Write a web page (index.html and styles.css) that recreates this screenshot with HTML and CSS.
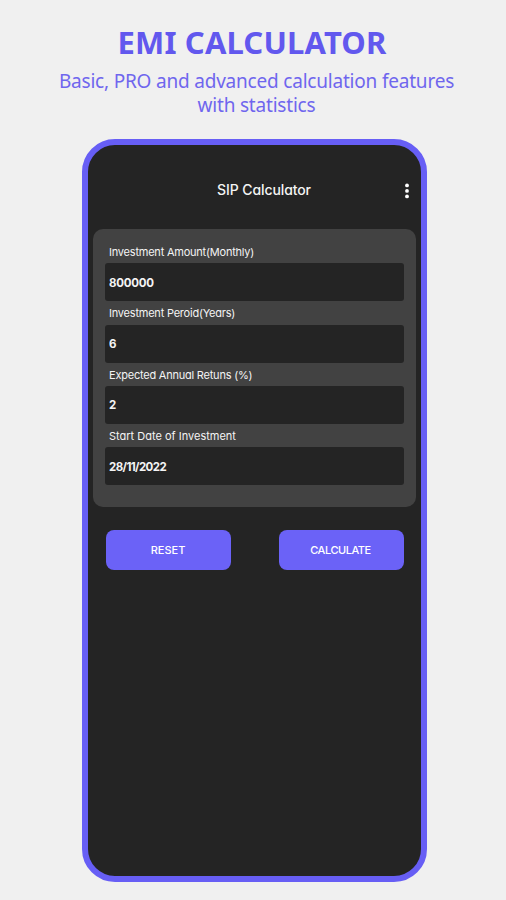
FILE: index.html
```html
<!DOCTYPE html>
<html lang="en">
<head>
    <meta charset="UTF-8">
    <meta name="viewport" content="width=device-width, initial-scale=1.0">
    <title>EMI Calculator</title>
    <link rel="stylesheet" href="styles.css">
</head>
<body>
    <header class="promo">
        <h1>EMI CALCULATOR</h1>
        <p>Basic, PRO and advanced calculation features<br>with statistics</p>
    </header>

    <div class="phone">
        <div class="app-bar">
            <h2>SIP Calculator</h2>
            <button type="button" class="menu-button" aria-label="Menu">
                <svg width="6" height="16" viewBox="0 0 6 16" fill="#fff">
                    <circle cx="3" cy="2.4" r="1.9"/>
                    <circle cx="3" cy="7.9" r="1.9"/>
                    <circle cx="3" cy="13.4" r="1.9"/>
                </svg>
            </button>
        </div>

        <form id="sipForm">
            <div class="card">
                <label for="amount" class="label-tight">Investment Amount(Monthly)</label>
                <input type="text" id="amount" value="800000">
                <label for="period" class="label-tight">Investment Peroid(Years)</label>
                <input type="text" id="period" value="6">
                <label for="returns" class="label-tight">Expected Annual Retuns (%)</label>
                <input type="text" id="returns" value="2">
                <label for="startDate">Start Date of Investment</label>
                <input type="text" id="startDate" class="input-date" value="28/11/2022">
            </div>

            <!-- Buttons Section -->
            <div class="button-container">
                <button type="reset" class="reset-button">RESET</button>
                <button type="button" class="calculate-button">CALCULATE</button>
            </div>
        </form>
    </div>
</body>
</html>
```
FILE: styles.css
```css
* {
    box-sizing: border-box;
}
body {
    margin: 0;
    height: 900px;
    overflow: hidden;
    background-color: #f0f0f0;
    font-family: Inter, "Liberation Sans", sans-serif;
    font-feature-settings: "cv11";
}
.promo {
    height: 139px;
    padding-top: 21px;
    text-align: center;
    color: #6258ee;
    font-family: "Noto Sans", sans-serif;
}
.promo h1 {
    margin: 0;
    padding-right: 2px;
    font-size: 31px;
    line-height: 42px;
    font-weight: bold;
    letter-spacing: 0.15px;
    white-space: nowrap;
}
.promo p {
    margin: 6px 0 0;
    padding-left: 7px;
    color: #6f66ee;
    font-size: 19px;
    line-height: 24px;
    letter-spacing: -0.2px;
    white-space: nowrap;
}
.phone {
    width: 345px;
    height: 743px;
    margin-left: 82px;
    padding: 0 5px;
    border: 6px solid #675ef5;
    border-radius: 33px;
    background-color: #242424;
    color: #f4f4f4;
}
.app-bar {
    display: flex;
    align-items: center;
    height: 84px;
    padding: 7px 2px 0 31px;
}
.app-bar h2 {
    flex: 1;
    margin: 0;
    padding-bottom: 1px;
    text-align: center;
    font-size: 14px;
    line-height: 20px;
    font-weight: 500;
    letter-spacing: -0.1px;
}
.menu-button {
    display: flex;
    margin-right: 4px;
    padding: 0;
    border: none;
    background: none;
}
.card {
    width: 323px;
    height: 278px;
    padding: 11px 12px;
    border-radius: 10px;
    background-color: #424242;
}
.card label {
    display: block;
    height: 23.3px;
    padding-left: 4px;
    font-size: 11px;
    line-height: 24px;
    white-space: nowrap;
}
.card .label-tight {
    letter-spacing: -0.22px;
}
.card input {
    display: block;
    width: 299px;
    height: 38px;
    padding: 1px 4px 0;
    border: none;
    border-radius: 3px;
    background-color: #242424;
    color: #f4f4f4;
    font-family: inherit;
    font-feature-settings: inherit;
    font-size: 11.5px;
    font-weight: 700;
    letter-spacing: -0.25px;
}
.card .input-date {
    letter-spacing: -0.6px;
}
.button-container {
    display: flex;
    justify-content: space-between;
    width: 297.5px;
    margin: 23px 0 0 13px;
}
.button-container button {
    width: 125px;
    height: 40px;
    padding: 0;
    border: none;
    border-radius: 8px;
    background-color: #6b62f7;
    color: #fff;
    font-family: inherit;
    font-size: 11px;
    font-weight: 500;
}
.button-container .reset-button {
    padding-right: 1px;
}
.button-container .calculate-button {
    padding-right: 1px;
    letter-spacing: -0.45px;
}
```
